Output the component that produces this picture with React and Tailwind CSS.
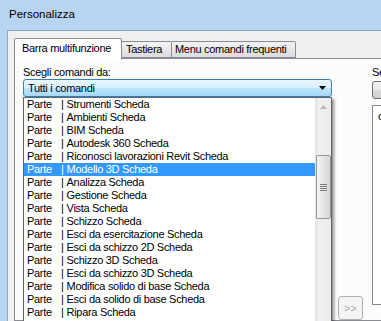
import React from "react";

const items = [
  "Strumenti Scheda",
  "Ambienti Scheda",
  "BIM Scheda",
  "Autodesk 360 Scheda",
  "Riconosci lavorazioni Revit Scheda",
  "Modello 3D Scheda",
  "Analizza Scheda",
  "Gestione Scheda",
  "Vista Scheda",
  "Schizzo Scheda",
  "Esci da esercitazione Scheda",
  "Esci da schizzo 2D Scheda",
  "Schizzo 3D Scheda",
  "Esci da schizzo 3D Scheda",
  "Modifica solido di base Scheda",
  "Esci da solido di base Scheda",
  "Ripara Scheda",
  "Gestione modello Scheda",
];

const font = { fontFamily: '"Liberation Sans", Arial, sans-serif' };

export default function App() {
  return (
    <div
      className="relative w-[381px] h-[321px] overflow-hidden bg-[#b7d4f0] text-black flex flex-col"
      style={font}
    >
      {/* title bar */}
      <div className="h-[30px] shrink-0 flex items-center pl-[9px] text-[11.5px] pb-[1px]">
        Personalizza
      </div>

      <div className="flex flex-1 min-h-0">
        <div className="w-[7px] shrink-0 bg-[#b7d4f0]" />
        <div className="flex-1 flex flex-col border-l border-t border-[#8fa8c2] bg-[#f0f0f0] pl-[6px] pt-[7px] min-w-0">
          {/* tabs */}
          <div className="flex items-end h-[20px] shrink-0 text-[11px] tracking-[-0.3px]">
            <div className="relative z-10 w-[108px] h-[21px] -mb-px bg-white border border-b-0 border-[#898c95] rounded-t-[2px] pl-[7px] pt-[2px] leading-[15px]">
              Barra multifunzione
            </div>
            <div className="w-[50px] h-[17px] border border-l-0 border-[#898c95] rounded-tr-[2px] bg-gradient-to-b from-[#f3f3f3] to-[#dcdcdc] pl-[4px] leading-[15px]">
              Tastiera
            </div>
            <div className="w-[124px] h-[17px] border border-l-0 border-[#898c95] rounded-tr-[2px] bg-gradient-to-b from-[#f3f3f3] to-[#dcdcdc] pl-[3px] leading-[15px]">
              Menu comandi frequenti
            </div>
          </div>

          {/* panel */}
          <div className="flex-1 w-[420px] border border-[#898c95] bg-[#fcfcfc] pl-[8px] flex min-h-0">
            {/* left column */}
            <div className="w-[309px] shrink-0 flex flex-col pt-[6px]">
              <div className="h-[16px] leading-[14px] text-[11px] tracking-[-0.3px]">
                Scegli comandi da:
              </div>
              <div className="h-[18px] shrink-0 rounded-[3px] border border-[#3c7fb1] bg-[linear-gradient(to_bottom,#eaf6fd_0%,#d9f0fc_50%,#bee6fd_50%,#a7d9f5_100%)] flex items-center justify-between pl-[4px] pr-[5px] text-[11px] tracking-[-0.3px]">
                <span>Tutti i comandi</span>
                <svg width="7" height="4" viewBox="0 0 7 4">
                  <path d="M0 0H7L3.5 4Z" fill="#000" />
                </svg>
              </div>
              {/* dropdown list */}
              <div className="relative z-20 flex h-[260px] shrink-0 border border-t border-[#646464] bg-white shadow-[2px_2px_3px_rgba(0,0,0,0.45)]">
                <div className="flex-1 min-w-0 overflow-hidden text-[11px] tracking-[-0.3px]">
                  {items.map((name, i) => (
                    <div
                      key={i}
                      className={
                        i === 5
                          ? "h-[13px] leading-[13px] whitespace-nowrap pl-[3px] bg-[#3399ff] text-white flex"
                          : "h-[13px] leading-[13px] whitespace-nowrap pl-[3px] flex"
                      }
                    >
                      <span className="inline-block w-[34px] shrink-0">Parte</span>
                      <span>|</span>
                      <span className="pl-[3px]">{name}</span>
                    </div>
                  ))}
                </div>
                {/* scrollbar */}
                <div className="w-[16px] shrink-0 bg-[linear-gradient(to_right,#e3e3e3,#f0f0f0_30%,#ececec)] flex flex-col items-center">
                  <div className="h-[17px] shrink-0 flex items-center justify-center">
                    <svg width="7" height="4" viewBox="0 0 7 4">
                      <path d="M0 4H7L3.5 0Z" fill="#b8b8b8" />
                    </svg>
                  </div>
                  <div className="mt-[40px] w-[15px] h-[64px] rounded-[2px] border border-[#959595] bg-[linear-gradient(to_right,#f5f5f5,#e6e6e6_50%,#d5d5d5)] flex flex-col items-center justify-center gap-[1px]">
                    <div className="w-[7px] h-[1px] bg-[#7d7d7d]" />
                    <div className="w-[7px] h-[1px] bg-[#7d7d7d]" />
                    <div className="w-[7px] h-[1px] bg-[#7d7d7d]" />
                    <div className="w-[7px] h-[1px] bg-[#7d7d7d]" />
                  </div>
                </div>
              </div>
            </div>

            {/* middle column */}
            <div className="w-[40px] shrink-0 pl-[6px] pt-[237px]">
              <div className="w-[25px] h-[24px] rounded-[3px] border border-[#adb2b5] bg-[#f4f4f4] flex items-center justify-center text-[10px] text-[#a0a0a0] tracking-[0.5px]">
                &gt;&gt;
              </div>
            </div>

            {/* right column */}
            <div className="flex-1 flex flex-col pt-[6px] text-[11px] tracking-[-0.3px]">
              <div className="h-[16px] leading-[14px] whitespace-nowrap">Seleziona</div>
              <div className="w-[80px] h-[18px] rounded-[3px] border border-[#707070] bg-[linear-gradient(to_bottom,#f2f2f2_0%,#ebebeb_50%,#dddddd_50%,#cfcfcf_100%)]" />
              <div className="mt-[6px] w-[80px] h-[200px] border border-[#828790] bg-white pl-[5px] pt-[2px] whitespace-nowrap">
                comandi
              </div>
            </div>
          </div>
        </div>
      </div>

      {/* mouse cursor */}
      <svg
        className="absolute left-[206px] top-[169px]"
        width="20"
        height="28"
        viewBox="0 0 20 28"
      >
        <defs>
          <linearGradient id="cg" x1="0" y1="0" x2="1" y2="1">
            <stop offset="0" stopColor="#ffffff" />
            <stop offset="1" stopColor="#c8c8c8" />
          </linearGradient>
        </defs>
        <path
          d="M3 3 L3 22 L7.3 17.8 L10.8 25 L13.8 23.6 L10.4 16.6 L16.3 16.6 Z"
          fill="rgba(0,0,0,0.22)"
          transform="translate(1.2 1.2)"
        />
        <path
          d="M2 2 L2 21 L6.3 16.8 L9.8 24 L12.8 22.6 L9.4 15.6 L15.3 15.6 Z"
          fill="url(#cg)"
          stroke="#000"
          strokeWidth="1"
          strokeLinejoin="round"
        />
      </svg>
    </div>
  );
}
